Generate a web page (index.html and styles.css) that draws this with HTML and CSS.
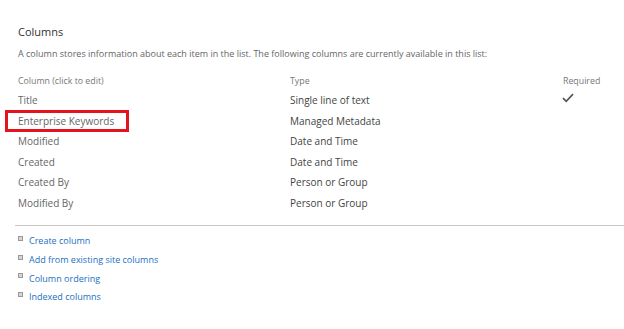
FILE: index.html
```html
<!DOCTYPE html>
<html lang="en">
<head>
<meta charset="utf-8">
<title>Columns</title>
<link rel="stylesheet" href="styles.css">
</head>
<body>
<div class="page">
  <h2 class="heading">Columns</h2>
  <p class="desc">A column stores information about each item in the list. The following columns are currently available in this list:</p>
  <div class="cols">
    <div class="hdr">Column (click to edit)</div>
    <div class="hdr">Type</div>
    <div class="hdr">Required</div>

    <div class="name">Title</div>
    <div class="type">Single line of text</div>
    <div class="req"><svg class="check" width="12" height="10" viewBox="0 0 12 10"><path d="M1 5.2 L4.2 8.4 L11 1.2" fill="none" stroke="#555" stroke-width="1.7"/></svg></div>

    <div class="name marked">Enterprise Keywords</div>
    <div class="type">Managed Metadata</div>
    <div class="req"></div>

    <div class="name">Modified</div>
    <div class="type">Date and Time</div>
    <div class="req"></div>

    <div class="name">Created</div>
    <div class="type">Date and Time</div>
    <div class="req"></div>

    <div class="name">Created By</div>
    <div class="type">Person or Group</div>
    <div class="req"></div>

    <div class="name">Modified By</div>
    <div class="type">Person or Group</div>
    <div class="req"></div>
  </div>
  <hr class="sep">
  <ul class="links">
    <li><span class="bullet"></span><a href="#">Create column</a></li>
    <li><span class="bullet"></span><a href="#">Add from existing site columns</a></li>
    <li><span class="bullet"></span><a href="#">Column ordering</a></li>
    <li><span class="bullet"></span><a href="#">Indexed columns</a></li>
  </ul>
</div>
</body>
</html>
```
FILE: styles.css
```css
html, body {
  margin: 0;
  padding: 0;
  background: #fff;
}
body {
  font-family: "Open Sans", "Noto Sans", sans-serif;
  color: #444;
}
.page {
  padding: 24px 0 0 18px;
}
.heading {
  margin: 0;
  font-size: 11px;
  font-weight: 400;
  line-height: 16px;
  color: #333;
}
.desc {
  margin: 7px 0 0 0;
  font-size: 9px;
  line-height: 14px;
  color: #666;
}
.cols {
  margin-top: 13px;
  display: grid;
  grid-template-columns: 272px 273px 1fr;
  grid-template-rows: 16px;
  grid-auto-rows: 20.6px;
  align-items: start;
}
.hdr {
  font-size: 8.8px;
  color: #777;
  line-height: 14px;
}
.name {
  font-size: 10px;
  color: #666;
  line-height: 20.6px;
}
.type {
  font-size: 10px;
  color: #444;
  line-height: 20.6px;
}
.req {
  line-height: 0;
  align-self: center;
}
.check {
  display: block;
  margin: -4px 0 0 -1px;
}
.marked {
  position: relative;
}
.marked::after {
  content: "";
  position: absolute;
  left: -13px;
  top: -1px;
  width: 118px;
  height: 16px;
  border: 3px solid #e5131d;
}
.sep {
  margin: 11px 0 0 -3px;
  border: 0;
  border-top: 1.5px solid #c8c8c8;
  height: 0;
}
.links {
  list-style: none;
  margin: 6px 0 0 0;
  padding: 0;
}
.links li {
  display: flex;
  align-items: center;
  height: 18.7px;
  font-size: 9px;
}
.links a {
  color: #1a6fbf;
  text-decoration: none;
}
.bullet {
  width: 3px;
  height: 3px;
  border: 1px solid #999;
  background: #d6d6d6;
  margin: -5px 6px 0 0;
}
```
